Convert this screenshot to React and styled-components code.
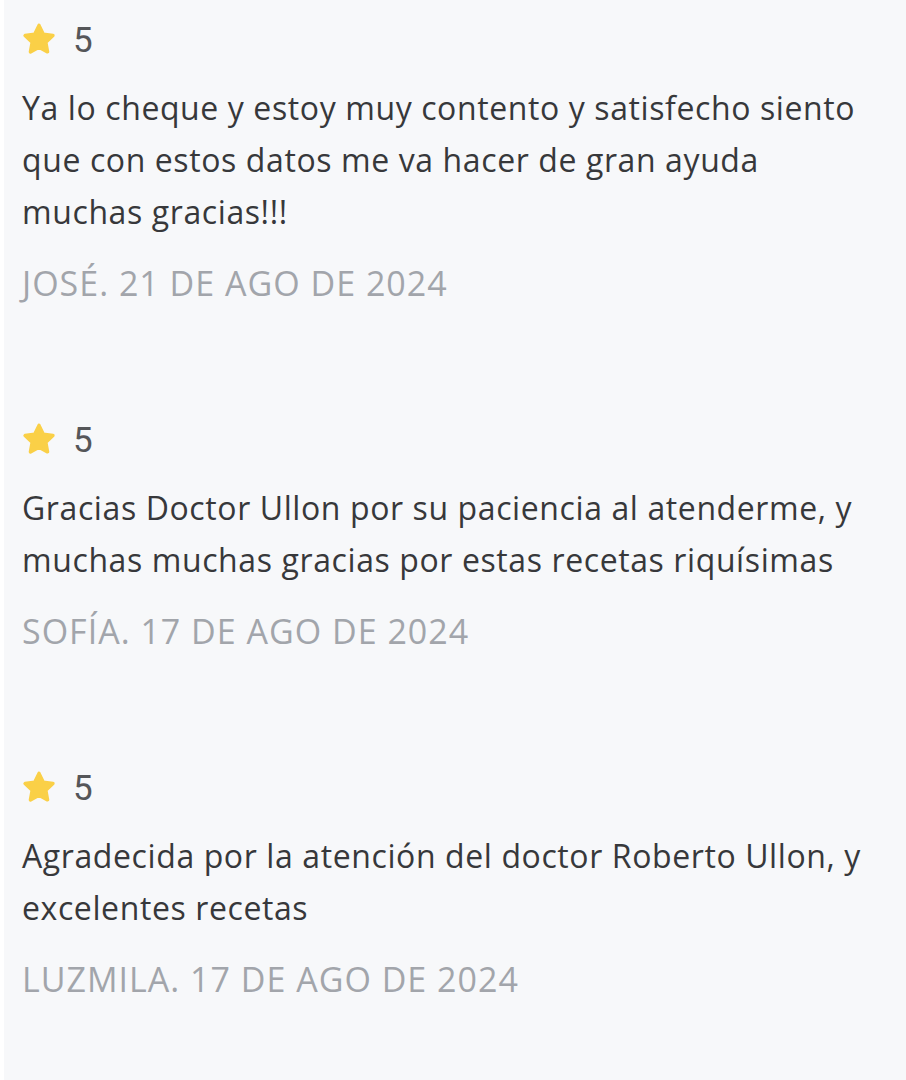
import React from 'react';
import styled, { createGlobalStyle } from 'styled-components';

const reviews = [
    {
        rating: 5,
        text: 'Ya lo cheque y estoy muy contento y satisfecho siento que con estos datos me va hacer de gran ayuda muchas gracias!!!',
        author: 'José',
        date: '21 de ago de 2024',
    },
    {
        rating: 5,
        text: 'Gracias Doctor Ullon por su paciencia al atenderme, y muchas muchas gracias por estas recetas riquísimas',
        author: 'Sofía',
        date: '17 de ago de 2024',
    },
    {
        rating: 5,
        text: 'Agradecida por la atención del doctor Roberto Ullon, y excelentes recetas',
        author: 'Luzmila',
        date: '17 de ago de 2024',
    },
];

const GlobalStyle = createGlobalStyle`
    html, body {
        margin: 0;
        padding: 0;
        background: #ffffff;
    }
`;

const Star = () => (
    <svg width="38" height="38" viewBox="0 0 24 24">
        <path
            d="M12 2.8l2.7 5.6 6.1.8-4.5 4.2 1.1 6.1L12 16.6l-5.4 2.9 1.1-6.1-4.5-4.2 6.1-.8z"
            fill="#fad047"
            stroke="#fad047"
            strokeWidth="2.2"
            strokeLinejoin="round"
        />
    </svg>
);

const App = () => (
    <>
        <GlobalStyle />
        <Page>
            {reviews.map((review, i) => (
                <Review key={i}>
                    <Rating>
                        <Star />
                        <span>{review.rating}</span>
                    </Rating>
                    <Body>{review.text}</Body>
                    <Meta>{review.author}. {review.date}</Meta>
                </Review>
            ))}
        </Page>
    </>
);

const Page = styled.div`
    min-height: 1080px;
    box-sizing: border-box;
    margin-left: 4px;
    padding: 20px 26px 0 18px;
    background: #f7f8fa;
    font-family: "Open Sans", "Noto Sans", sans-serif;
    display: flex;
    flex-direction: column;
    gap: 111px;
`;

const Review = styled.div`
    display: flex;
    flex-direction: column;
`;

const Rating = styled.div`
    height: 40px;
    margin-left: -2px;
    display: flex;
    align-items: center;
    gap: 15px;

    span {
        font-family: Roboto, sans-serif;
        font-size: 35px;
        color: #555659;
    }
`;

const Body = styled.p`
    margin: 22px 0 0;
    font-size: 32px;
    letter-spacing: 0.6px;
    line-height: 52px;
    color: #37383b;
`;

const Meta = styled.div`
    margin-top: 19px;
    font-size: 34px;
    letter-spacing: 1px;
    line-height: 52px;
    text-transform: uppercase;
    color: #a2a5ab;
`;

export default App;
